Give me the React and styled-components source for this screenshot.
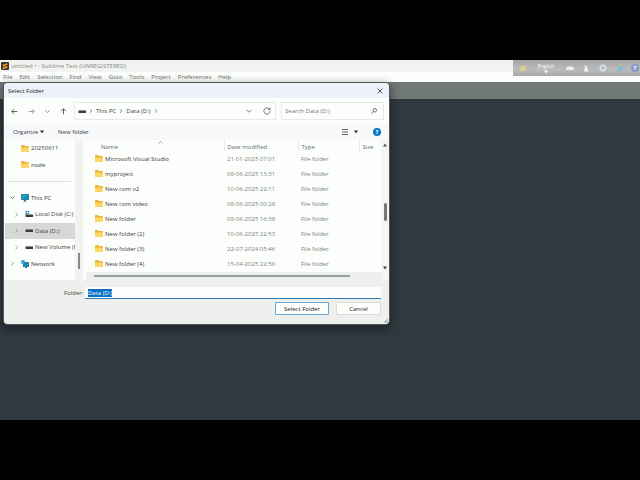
import React, { useEffect, useRef } from 'react';
import styled, { createGlobalStyle } from 'styled-components';

const menus = ['File', 'Edit', 'Selection', 'Find', 'View', 'Goto', 'Tools', 'Project', 'Preferences', 'Help'];

const folders = [
  { name: 'Microsoft Visual Studio', date: '21-01-2025 07:01' },
  { name: 'myproject', date: '09-06-2025 13:31' },
  { name: 'New com v2', date: '10-06-2025 22:11' },
  { name: 'New com video', date: '08-06-2025 00:28' },
  { name: 'New folder', date: '09-06-2025 16:38' },
  { name: 'New folder (2)', date: '10-06-2025 22:53' },
  { name: 'New folder (3)', date: '22-07-2024 05:46' },
  { name: 'New folder (4)', date: '15-04-2025 22:56' },
];

const ARROWS = {
  left: 'M9 5H1M4.5 1.5 1 5l3.5 3.5',
  right: 'M1 5h8M5.5 1.5 9 5 5.500 8.5',
  up: 'M5 9V1M1.500 4.500 5 1l3.500 3.500',
  chevronDown: 'M1 3l4 4 4-4',
  chevronRight: 'M3 1l4 4-4 4',
  chevronUp: 'M1 7l4-4 4 4',
  close: 'M1 1l8 8M9 1L1 9',
};

const Line = ({ shape, size = 6, color = '#555', weight = 1.3 }) => (
  <svg width={size} height={size} viewBox="0 0 10 10" fill="none" stroke={color} strokeWidth={weight} aria-hidden="true">
    <path d={ARROWS[shape]} />
  </svg>
);

const Caret = ({ color = '#333', up }) => (
  <svg width="4" height="4" viewBox="0 0 4 4" aria-hidden="true">
    <path d={up ? 'M0 3.500h4L2 .5z' : 'M0 .5h4L2 3.500z'} fill={color} />
  </svg>
);

const FolderIcon = () => (
  <svg width="8" height="7" viewBox="0 0 16 14" aria-hidden="true">
    <path d="M0 1.500Q0 0 1.500 0H6l2 2h6.500Q16 2 16 3.500V13H0z" fill="#e9b437" />
    <path d="M0 5h16v7.500Q16 14 14.500 14h-13Q0 14 0 12.500z" fill="#fbd765" />
  </svg>
);

const DriveIcon = ({ system }) => (
  <svg width="8" height="7" viewBox="0 0 16 14" aria-hidden="true">
    {system && <path d="M1 0h3v3H1zM5 0h3v3H5zM1 4h3v3H1zM5 4h3v3H5z" fill="#1b92d1" />}
    <rect x="1" y={system ? 7 : 5} width="15" height="5" rx="1" fill="#363a3a" />
    <rect x="1" y={system ? 7 : 5} width="15" height="1" fill="#858a8a" />
  </svg>
);

const PcIcon = () => (
  <svg width="8" height="8" viewBox="0 0 16 16" aria-hidden="true">
    <rect width="16" height="12" rx="1" fill="#16799e" />
    <path d="M1 1h14v10H1z" fill="#279fc8" />
    <path d="M1 11 15 1v10z" fill="#1a83b1" />
    <path d="M6 12h4v2h2v1H4v-1h2z" fill="#506d78" />
  </svg>
);

const NetworkIcon = () => (
  <svg width="8" height="8" viewBox="0 0 16 16" aria-hidden="true">
    <rect x="4" y="4" width="12" height="10" rx="1" fill="#16799e" />
    <path d="M5 5h10v8H5z" fill="#1f8bb5" />
    <path d="M8 14h4v2H8z" fill="#506d78" />
    <circle cx="4" cy="4" r="4" fill="#1689b7" />
    <path d="M0 4h8M4 0v8" stroke="#8bd0e4" strokeWidth="1" />
  </svg>
);

const SublimeIcon = () => (
  <svg width="8" height="8" viewBox="0 0 16 16" aria-hidden="true">
    <rect width="16" height="16" rx="2" fill="#3b3833" />
    <path d="M3 5.500 13 2.500v3L7 7.500l6 2v2l-10 3v-3l6-2-6-2z" fill="#ff9c1c" />
  </svg>
);

const Refresh = () => (
  <svg width="8" height="8" viewBox="0 0 16 16" fill="none" stroke="#555" strokeWidth="1.500" aria-hidden="true">
    <path d="M13.500 5A6.300 6.300 0 1 0 14.300 8M14 1v4h-4" />
  </svg>
);

const Magnifier = () => (
  <svg width="6" height="6" viewBox="0 0 12 12" fill="none" stroke="#444" strokeWidth="1.500" aria-hidden="true">
    <circle cx="7.500" cy="4.500" r="3.500" />
    <path d="M5 7 1 11" />
  </svg>
);

const ListIcon = () => (
  <svg width="6" height="6" viewBox="0 0 6 6" stroke="#444" aria-hidden="true">
    <path d="M0 .5h6M0 3h6M0 5.500h6" strokeWidth=".8" />
  </svg>
);

const KeyboardIcon = () => (
  <svg width="8" height="8" viewBox="0 0 16 16" fill="#eceeee" aria-hidden="true">
    <path d="M4 5h8l4 3v4H0V8z" />
  </svg>
);

const PersonIcon = () => (
  <svg width="8" height="8" viewBox="0 0 16 16" fill="#f2f2f2" aria-hidden="true">
    <path d="M4 1l3 4h2l2-3-1 5 3 8H4l2-8z" />
  </svg>
);

const GearIcon = () => (
  <svg width="8" height="8" viewBox="0 0 16 16" fill="none" stroke="#dde1e4" aria-hidden="true">
    <circle cx="8" cy="8" r="5" strokeWidth="3" />
    <circle cx="8" cy="8" r="7" strokeWidth="1.500" strokeDasharray="2.700 2.800" />
  </svg>
);

const BrowserIcon = () => (
  <svg width="8" height="8" viewBox="0 0 16 16" fill="none" aria-hidden="true">
    <path d="M3.500 8.500h10A5 5 0 1 0 12 12.500" stroke="#6cb9e6" strokeWidth="2.500" />
    <path d="M2 14C0 10 9 1 14 2" stroke="#ebd66c" strokeWidth="1.800" />
  </svg>
);

const TreeItem = ({ icon, label, nested, open, selected, leaf }) => (
  <TreeButton $nested={nested} $selected={selected}>
    <Twisty>{!leaf && <Line shape={open ? 'chevronDown' : 'chevronRight'} size={5} color={open ? '#222' : '#777'} />}</Twisty>
    {icon}
    <span>{label}</span>
  </TreeButton>
);

const InputBar = () => (
  <LanguageBar>
    <BarButton $color="#e9d87c" aria-label="Script">अ</BarButton>
    <LanguageButton>
      English
      <Caret color="#fff" />
    </LanguageButton>
    <BarButton aria-label="Keyboard"><KeyboardIcon /></BarButton>
    <BarButton aria-label="User"><PersonIcon /></BarButton>
    <BarButton aria-label="Settings"><GearIcon /></BarButton>
    <BarButton aria-label="Browser"><BrowserIcon /></BarButton>
    <HelpDot $color="#8e98c9">?</HelpDot>
  </LanguageBar>
);

const FileTable = () => (
  <Table>
    <colgroup>
      <NameCol />
      <DateCol />
      <TypeCol />
      <col />
    </colgroup>
    <thead>
      <tr>
        <HeadCell $first>
          Name
          <SortMark><Line shape="chevronUp" size={5} color="#777" /></SortMark>
        </HeadCell>
        <HeadCell>Date modified</HeadCell>
        <HeadCell>Type</HeadCell>
        <HeadCell>Size</HeadCell>
      </tr>
    </thead>
    <tbody>
      {folders.map(({ name, date }) => (
        <tr key={name}>
          <Cell $first>
            <FileName><FolderIcon />{name}</FileName>
          </Cell>
          <Cell>{date}</Cell>
          <Cell>File folder</Cell>
          <Cell />
        </tr>
      ))}
    </tbody>
  </Table>
);

const FolderDialog = () => {
  const field = useRef(null);

  useEffect(() => {
    field.current.focus();
    field.current.select();
  }, []);

  return (
    <Dialog role="dialog" aria-labelledby="dialog-title">
      <DialogTitle>
        <span id="dialog-title">Select Folder</span>
        <PlainButton aria-label="Close"><Line shape="close" color="#222" /></PlainButton>
      </DialogTitle>

      <NavRow>
        <NavButtons>
          <PlainButton aria-label="Back"><Line shape="left" size={7} /></PlainButton>
          <PlainButton aria-label="Forward"><Line shape="right" size={7} color="#999" /></PlainButton>
          <PlainButton aria-label="Recent"><Line shape="chevronDown" size={5} /></PlainButton>
          <PlainButton aria-label="Up"><Line shape="up" size={7} /></PlainButton>
        </NavButtons>
        <Address>
          <DriveIcon />
          <Line shape="chevronRight" size={4} weight={2} />
          <PlainButton>This PC</PlainButton>
          <Line shape="chevronRight" size={4} weight={2} />
          <PlainButton>Data (D:)</PlainButton>
          <Line shape="chevronRight" size={4} weight={2} />
          <AddressTools>
            <PlainButton aria-label="Previous locations"><Line shape="chevronDown" /></PlainButton>
            <PlainButton aria-label="Refresh"><Refresh /></PlainButton>
          </AddressTools>
        </Address>
        <Search>
          <SearchInput placeholder="Search Data (D:)" aria-label="Search Data (D:)" />
          <Magnifier />
        </Search>
      </NavRow>

      <Toolbar>
        <PlainButton>Organize <Caret /></PlainButton>
        <PlainButton>New folder</PlainButton>
        <ToolbarEnd>
          <PlainButton aria-label="Change view"><ListIcon /></PlainButton>
          <PlainButton aria-label="More options"><Caret /></PlainButton>
          <HelpDot $color="#0878be">?</HelpDot>
        </ToolbarEnd>
      </Toolbar>

      <Browser>
        <Tree>
          <TreeItem leaf icon={<FolderIcon />} label="20250611" />
          <TreeItem leaf icon={<FolderIcon />} label="node" />
          <Divider />
          <TreeItem open icon={<PcIcon />} label="This PC" />
          <TreeItem nested icon={<DriveIcon system />} label="Local Disk (C:)" />
          <TreeItem nested selected icon={<DriveIcon />} label="Data (D:)" />
          <TreeItem nested icon={<DriveIcon />} label="New Volume (E:)" />
          <TreeItem icon={<NetworkIcon />} label="Network" />
        </Tree>
        <TreeScroll><TreeThumb /></TreeScroll>
        <Files>
          <FileTable />
          <HorizontalScroll><HorizontalThumb /></HorizontalScroll>
        </Files>
        <VerticalScroll>
          <Caret up color="#555" />
          <VerticalThumb />
          <Caret color="#444" />
        </VerticalScroll>
      </Browser>

      <Footer>
        <FieldRow>
          <FieldLabel htmlFor="folder">Folder:</FieldLabel>
          <FolderInput id="folder" ref={field} defaultValue="Data (D:)" />
        </FieldRow>
        <Actions>
          <ActionButton $primary>Select Folder</ActionButton>
          <ActionButton>Cancel</ActionButton>
        </Actions>
        <Grip width="5" height="5" viewBox="0 0 5 5" aria-hidden="true">
          <path d="M5 0v5H0z" fill="#b9bfbd" />
        </Grip>
      </Footer>
    </Dialog>
  );
};

const App = () => (
  <Screen>
    <GlobalStyle />
    <Editor>
      <TitleBar>
        <SublimeIcon />
        untitled • - Sublime Text (UNREGISTERED)
      </TitleBar>
      <MenuBar>
        {menus.map((menu) => <PlainButton key={menu}>{menu}</PlainButton>)}
      </MenuBar>
      <TabStrip />
      <InputBar />
      <FolderDialog />
    </Editor>
  </Screen>
);

export default App;

const GlobalStyle = createGlobalStyle`
  * {
    box-sizing: border-box;
  }
  body {
    margin: 0;
    background: #000;
  }
  body, button, input {
    font-family: 'Open Sans', 'Noto Sans', sans-serif;
    font-size: 6px;
    line-height: 8px;
    color: #3c4040;
  }
  svg {
    display: block;
    flex: none;
  }
`;

const Screen = styled.div`
  display: flex;
  min-height: 100vh;
  padding: 60px 0;
`;

const Editor = styled.main`
  position: relative;
  flex: 1;
  background: #2f3a40;
`;

const TitleBar = styled.header`
  display: flex;
  align-items: center;
  gap: 2px;
  height: 12px;
  padding-left: 1px;
  background: #f0f3ef;
  color: #858885;
`;

const PlainButton = styled.button`
  display: flex;
  align-items: center;
  gap: 2px;
  padding: 0;
  border: 0;
  background: none;
  white-space: nowrap;
`;

const MenuBar = styled.nav`
  display: flex;
  gap: 7px;
  height: 10px;
  padding-left: 3px;
  background: #fbfefa;

  button {
    color: #666966;
  }
`;

const TabStrip = styled.div`
  height: 17px;
  background: #707878;
`;

const LanguageBar = styled.div`
  position: absolute;
  top: 0;
  right: 0;
  display: flex;
  align-items: center;
  justify-content: space-between;
  width: 127px;
  height: 16px;
  padding: 0 1px 0 6px;
  background: linear-gradient(#a3a6a8, #b9bbbc 60%, #a6a8a9);
`;

const BarButton = styled(PlainButton)`
  color: ${({ $color }) => $color || '#fff'};
  font-size: 8px;
  font-weight: 700;
`;

const LanguageButton = styled(PlainButton)`
  flex-direction: column;
  gap: 0;
  min-width: 24px;
  color: #fff;
  font-size: 5px;
`;

const HelpDot = styled.button`
  width: 8px;
  height: 8px;
  padding: 0;
  border: 0;
  border-radius: 50%;
  background: ${({ $color }) => $color};
  color: #fff;
  font-weight: 700;
  text-align: center;
`;

const Dialog = styled.section`
  position: absolute;
  top: 23px;
  left: 4px;
  width: 60%;
  min-width: 385px;
  overflow: hidden;
  border-radius: 4px;
  background: #fbfefa;
  box-shadow: 0 0 0 1px #50585b, 0 3px 10px 2px rgba(0, 0, 0, 0.4);
`;

const DialogTitle = styled.div`
  display: flex;
  align-items: center;
  justify-content: space-between;
  height: 15px;
  padding: 0 6px 0 4px;
  background: #edf1f9;
  color: #222;
`;

const NavRow = styled.div`
  display: flex;
  align-items: center;
  gap: 5px;
  height: 26px;
  padding: 0 5px 0 7px;
`;

const NavButtons = styled.div`
  display: flex;
  flex: none;
  align-items: center;
  justify-content: space-between;
  width: 58px;
  padding-right: 2px;
`;

const Address = styled.div`
  display: flex;
  flex: 1;
  align-items: center;
  gap: 3px;
  height: 18px;
  padding: 0 4px 0 3px;
  border: 1px solid #e6e9e5;
`;

const AddressTools = styled.div`
  display: flex;
  align-items: center;
  gap: 11px;
  margin-left: auto;
`;

const Search = styled.label`
  display: flex;
  align-items: center;
  width: 103px;
  height: 18px;
  padding: 0 6px 0 3px;
  border: 1px solid #e6e9e5;
`;

const SearchInput = styled.input`
  flex: 1;
  min-width: 0;
  padding: 0;
  border: 0;
  outline: 0;
  background: none;

  &::placeholder {
    color: #777;
  }
`;

const Toolbar = styled.div`
  display: flex;
  align-items: center;
  gap: 14px;
  height: 16px;
  padding: 0 8px 0 9px;
  background: #f6f8fa;
`;

const ToolbarEnd = styled.div`
  display: flex;
  align-items: center;
  gap: 6px;
  margin-left: auto;

  ${HelpDot} {
    margin-left: 9px;
  }
`;

const Browser = styled.div`
  display: flex;
`;

const Tree = styled.nav`
  display: grid;
  grid-auto-rows: 1fr;
  width: 71px;
  padding: 0 0 8px 1px;
  overflow: hidden;
`;

const TreeButton = styled.button`
  display: flex;
  align-items: center;
  gap: 2px;
  min-width: 0;
  padding: 0 0 0 ${({ $nested }) => ($nested ? 9 : 5)}px;
  border: 0;
  overflow: hidden;
  background: ${({ $selected }) => ($selected ? '#d6d8d5' : 'none')};
  white-space: nowrap;
`;

const Twisty = styled.span`
  flex: none;
  width: 9px;
`;

const Divider = styled.hr`
  align-self: center;
  width: 63px;
  margin: 0 auto 0 3px;
  border: 0;
  border-top: 1px solid #dcdfdb;
`;

const TreeScroll = styled.div`
  display: flex;
  align-items: flex-end;
  justify-content: center;
  width: 8px;
  padding-bottom: 11px;
  background: #f0f3ef;
`;

const TreeThumb = styled.div`
  width: 2px;
  height: 16px;
  background: #858885;
`;

const Files = styled.div`
  flex: 1;
  min-width: 0;
`;

const Table = styled.table`
  width: 100%;
  table-layout: fixed;
  border-collapse: collapse;
`;

const NameCol = styled.col`
  width: 141px;
`;

const DateCol = styled.col`
  width: 74px;
`;

const TypeCol = styled.col`
  width: 61px;
`;

const HeadCell = styled.th`
  position: relative;
  height: 11px;
  padding: 3px 0 0 ${({ $first }) => ($first ? 18 : 3)}px;
  border-right: 1px solid #e6e9e5;
  color: #626a70;
  font-weight: 400;
  text-align: left;

  &:last-child {
    border-right: 0;
  }
`;

const SortMark = styled.span`
  position: absolute;
  top: 0;
  left: 75px;
`;

const Cell = styled.td`
  height: 15px;
  padding: 0 0 0 ${({ $first }) => ($first ? 12 : 3)}px;
  color: ${({ $first }) => ($first ? '#3c4040' : '#7b7e7b')};
  white-space: nowrap;
`;

const FileName = styled.span`
  display: flex;
  align-items: center;
  gap: 2px;
`;

const HorizontalScroll = styled.div`
  height: 8px;
  margin: 1px 0 0 3px;
  padding: 3px 31px 0 8px;
  background: #edf0ec;
`;

const HorizontalThumb = styled.div`
  height: 2px;
  background: #9ba19b;
`;

const VerticalScroll = styled.div`
  display: flex;
  flex-direction: column;
  align-items: center;
  justify-content: space-between;
  width: 8px;
  padding: 3px 0 10px;
  background: #f2f5f1;
`;

const VerticalThumb = styled.div`
  width: 3px;
  height: 18px;
  margin-top: 10px;
  border-radius: 2px;
  background: #777;
`;

const Footer = styled.div`
  position: relative;
  padding: 7px 8px 9px 60px;
  background: #edf0ec;
`;

const FieldRow = styled.div`
  display: flex;
  align-items: center;
  gap: 1px;
`;

const FieldLabel = styled.label`
  width: 20px;
`;

const FolderInput = styled.input`
  flex: 1;
  height: 12px;
  padding: 0 3px;
  border: 0;
  border-bottom: 1px solid #2c7ab8;
  outline: 0;
  background: #fbfefa;

  &::selection {
    background: #0b6fc4;
    color: #fff;
  }
`;

const Actions = styled.div`
  display: flex;
  justify-content: flex-end;
  gap: 7px;
  margin-top: 3px;
`;

const ActionButton = styled.button`
  width: ${({ $primary }) => ($primary ? 54 : 45)}px;
  height: 13px;
  padding: 0;
  border: 1px solid ${({ $primary }) => ($primary ? '#6fa3cf' : '#d9dcd8')};
  border-radius: 1px;
  background: #fbfefa;
  color: #222;
`;

const Grip = styled.svg`
  position: absolute;
  right: 1px;
  bottom: 1px;
`;
